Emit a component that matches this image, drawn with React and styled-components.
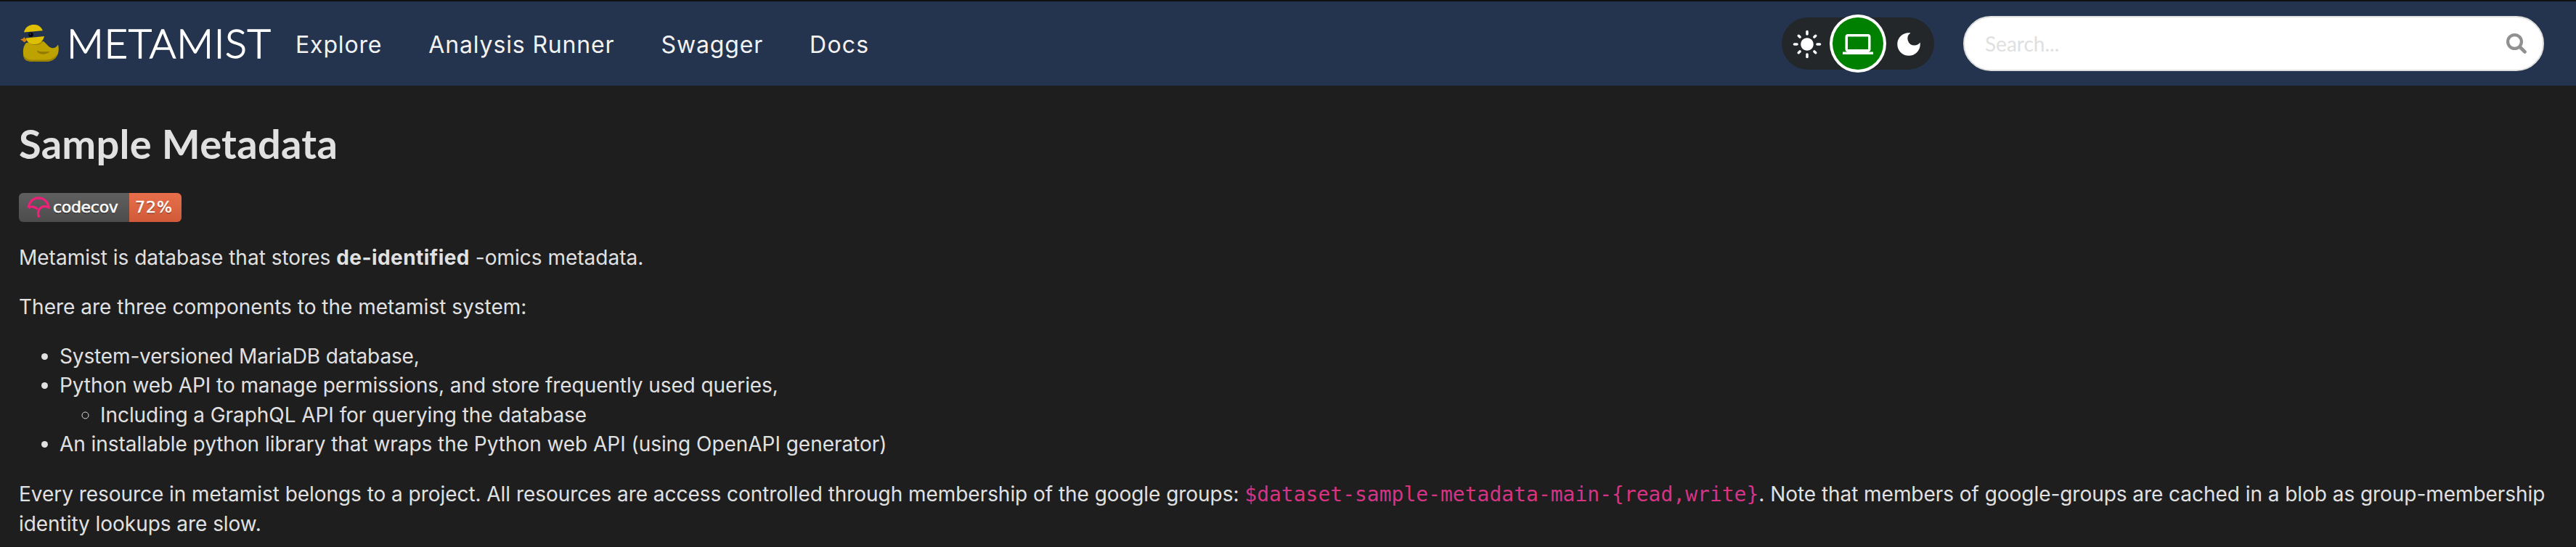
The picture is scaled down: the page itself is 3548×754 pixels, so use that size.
import React from 'react';
import styled, { createGlobalStyle } from 'styled-components';
import { MdLightMode, MdLaptop, MdDarkMode } from 'react-icons/md';

const GlobalStyle = createGlobalStyle`
  * { box-sizing: border-box; }
  html, body { margin: 0; background: #1e1e1e; }
  body { font: 28px/40px Inter, sans-serif; color: #e1e1e1; }
`;

const Page = styled.div`
  height: 754px;
  overflow: hidden;
  border-top: 2px solid #101010;
  border-bottom: 1px solid #191919;
`;

const Header = styled.header`
  height: 116px;
  display: flex;
  align-items: center;
  background: #24344e;
  padding: 0 44px 0 28px;
`;

const Brand = styled.a`
  display: flex;
  align-items: center;
  color: #fff;
  width: 349px;
`;

const Duck = styled.svg`
  width: 53px;
  height: 52px;
  flex: none;
`;

const Wordmark = styled.span`
  font: 300 56px/60px Lato, sans-serif;
  letter-spacing: 0.65px;
  -webkit-text-stroke: 1.3px #fff;
  margin: -3px 0 0 11px;
`;

const Nav = styled.nav`
  display: flex;
  flex: 1;
  gap: 64px;
  margin-left: 30px;
  padding-top: 3px;
`;

const NavLink = styled.a`
  font-size: 32px;
  letter-spacing: 0.85px;
  color: #f2f2f2;

  &:last-child { letter-spacing: 1.2px; }
`;

const Toggle = styled.div`
  display: flex;
  width: 210px;
  height: 72px;
  border-radius: 36px;
  background: #23272a;
`;

const Mode = styled.button`
  width: 70px;
  height: 72px;
  padding: 2px 0 0;
  border: 0;
  border-radius: 50%;
  display: flex;
  align-items: center;
  justify-content: center;
  color: #fff;
  background: ${(p) => (p.$active ? '#008000' : 'transparent')};
  box-shadow: ${(p) => (p.$active ? '0 0 0 4px #fff' : 'none')};
  svg { width: 42px; height: 42px; }
`;

const Search = styled.div`
  display: flex;
  align-items: center;
  justify-content: space-between;
  width: 800px;
  height: 76px;
  margin-left: 40px;
  padding: 0 22px 0 28px;
  border: 2px solid #dedede;
  border-radius: 38px;
  background: #fff;
  color: #e0e0e0;
  font-family: Lato, sans-serif;
  svg { width: 28px; height: 28px; }
`;

const Content = styled.main`
  padding: 44px 40px 0 26px;
`;

const Title = styled.h1`
  margin: 0;
  font: 700 56px/72px Lato, sans-serif;
  letter-spacing: 0.28px;
`;

const Badge = styled.div`
  display: flex;
  width: 224px;
  height: 40px;
  margin: 32px 0 29px;
  border-radius: 6px;
  overflow: hidden;
  color: #fff;
  font: 22px/40px "DejaVu Sans", sans-serif;
  -webkit-text-stroke: 0.5px #fff;
  text-shadow: 0 2px 0 rgba(1, 1, 1, 0.3);
`;

const BadgeLabel = styled.span`
  display: flex;
  align-items: center;
  width: 152px;
  padding-left: 11px;
  gap: 4px;
  letter-spacing: -0.3px;
  background: linear-gradient(#606060, #4c4c4c);
  svg { width: 32px; height: 32px; flex: none; }
`;

const BadgeValue = styled.span`
  width: 72px;
  padding-left: 8px;
  letter-spacing: 1px;
  background: linear-gradient(#e76f4b, #d05a39);
`;

const Text = styled.p`
  margin: 0 0 28px;
  letter-spacing: ${(p) => p.$tracking || '0'};
  line-height: ${(p) => (p.$loose ? '41px' : '40px')};
`;

const Strong = styled.strong`
  font-weight: 700;
  letter-spacing: 0.45px;
`;

const List = styled.ul`
  margin: ${(p) => (p.$nested ? '0' : '0 0 28px')};
  padding-left: 56px;
  line-height: 40.4px;
  letter-spacing: -0.06px;
`;

const Item = styled.li`
  letter-spacing: ${(p) => p.$tracking || 'inherit'};
`;

const Code = styled.code`
  font-family: "DejaVu Sans Mono", monospace;
  font-size: 28px;
  letter-spacing: 0;
  color: #d63384;
`;

const links = ['Explore', 'Analysis Runner', 'Swagger', 'Docs'];

function DuckLogo() {
  return (
    <Duck viewBox="0 0 53 52">
      <path d="M8 25C3 31 3.500 38 4.500 44c1.500 5 6 7 13 7h17c11 0 17-6 18-14 .6-4 .2-7-.5-9.500-2.500 3.500-5 5.500-9 4.500-5-1.500-7-6-11-9z" fill="#bea300" />
      <path d="M4.300 41c2 6 7 7.500 14 7.500h15c9 0 15-3 18.700-10C50 47 44 51 34 51H17.500c-8 0-12-2-13-7z" fill="#998200" />
      <path d="M23 35.500c5 2.500 11 2 18 1.300-4 3.700-9 5-14 3.200-3-1-4-3-4-4.500z" fill="#917b00" />
      <path d="M32 22c-2 4-7 6.500-12 6-5-.3-8-2-10-4.500 8 5 16 4 22-1.500z" fill="#998200" />
      <path d="M5 10.500C8-3 27-3.500 30.800 8.300z" fill="#dfc000" />
      <path d="M7.500 18.500L33 16c-1.500 7-7 11-14 11-6 0-10-3.500-11.500-8.500z" fill="#dfc000" />
      <circle cx="14.500" cy="13.800" r="3.200" fill="#050505" />
      <circle cx="13.600" cy="12.700" r="0.800" fill="#64708a" />
      <path d="M0 20.300l4-1 1-2.300 4 4.500-3.500 3-2-2z" fill="#d9820b" />
    </Duck>
  );
}

function Umbrella() {
  return (
    <svg viewBox="0 0 32 32" fill="none" stroke="#f01f7a" strokeWidth="3.2" strokeLinejoin="round">
      <path d="M2.400 16.300C3 8 9 2.900 16 2.900S29.500 8 30.200 16.300C24 12 15.500 16 15.500 24c0 2 .5 3.800 1.200 5.500M2.400 16.300c4-2.500 9-1.500 12 2" />
    </svg>
  );
}

export default function App() {
  return (
    <Page>
      <GlobalStyle />
      <Header>
        <Brand><DuckLogo /><Wordmark>METAMIST</Wordmark></Brand>
        <Nav>{links.map((l) => <NavLink key={l}>{l}</NavLink>)}</Nav>
        <Toggle>
          <Mode><MdLightMode /></Mode>
          <Mode $active><MdLaptop /></Mode>
          <Mode><MdDarkMode /></Mode>
        </Toggle>
        <Search>
          <span>Search...</span>
          <svg viewBox="0 0 28 28" fill="none" stroke="#909090" strokeLinecap="round">
            <circle cx="11.500" cy="11.500" r="9.400" strokeWidth="4.200" />
            <path d="M19 19l6.500 6.500" strokeWidth="4.600" />
          </svg>
        </Search>
      </Header>
      <Content>
        <Title>Sample Metadata</Title>
        <Badge>
          <BadgeLabel><Umbrella />codecov</BadgeLabel>
          <BadgeValue>72%</BadgeValue>
        </Badge>
        <Text>Metamist is database that stores <Strong>de-identified</Strong> -omics metadata.</Text>
        <Text>There are three components to the metamist system:</Text>
        <List>
          <Item $tracking="-0.14px">System-versioned MariaDB database,</Item>
          <Item $tracking="-0.08px">
            Python web API to manage permissions, and store frequently used queries,
            <List $nested><Item>Including a GraphQL API for querying the database</Item></List>
          </Item>
          <Item $tracking="-0.045px">An installable python library that wraps the Python web API (using OpenAPI generator)</Item>
        </List>
        <Text $loose $tracking="-0.048px">
          Every resource in metamist belongs to a project. All resources are access controlled through membership of the google groups: <Code>{'$dataset-sample-metadata-main-{read,write}'}</Code>. Note that members of google-groups are cached in a blob as group-membership identity lookups are slow.
        </Text>
      </Content>
    </Page>
  );
}
